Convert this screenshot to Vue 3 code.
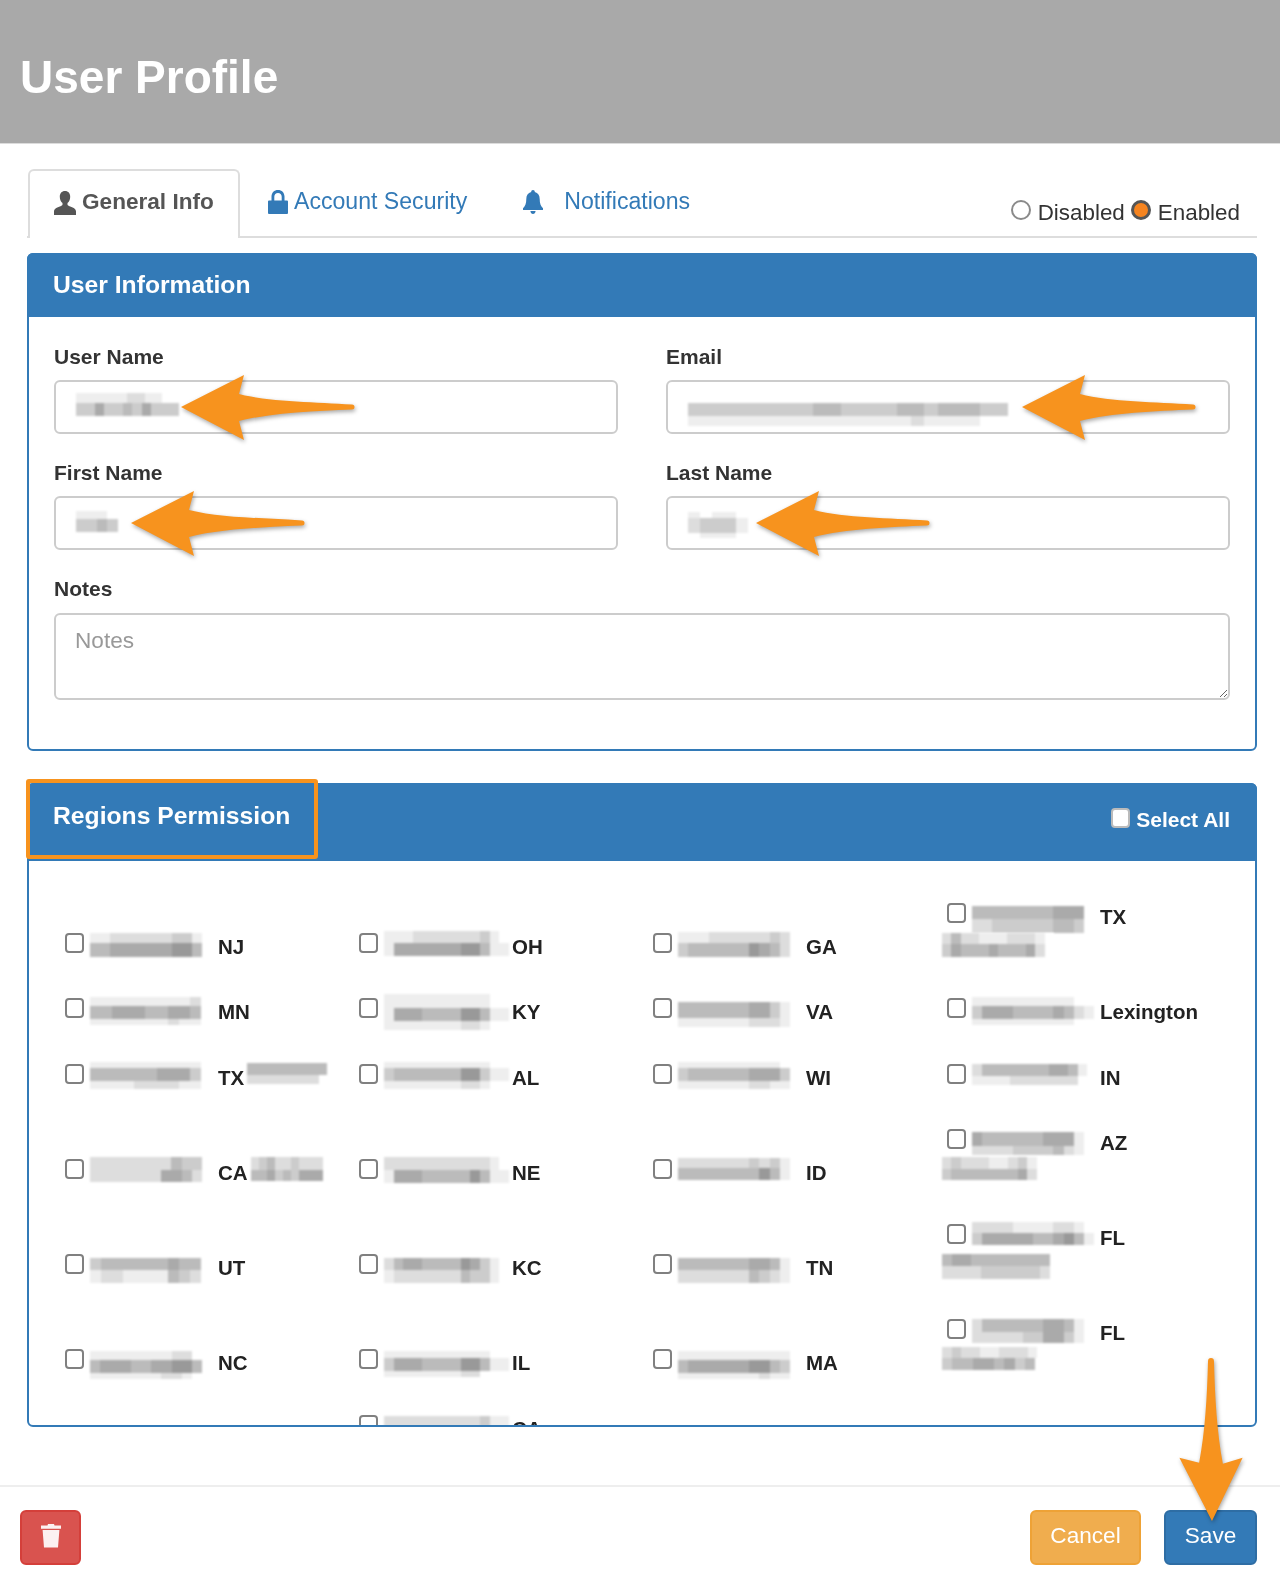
<script setup>
import { h } from 'vue'

const Px = (props) =>
  h('div', { class: 'px', style: { width: props.b.w + 'px', marginTop: props.b.y + 'px' } },
    props.b.rows.map(([height, str]) =>
      h('div', { class: 'px-row', style: { height: height + 'px' } },
        str.split('').map((c) => h('i', { style: { background: c.length && c !== '.' ? `#${c}${c}${c}` : 'transparent' } })))))
Px.props = ['b']

const P = (w, y, ...rows) => ({ w, y, rows })

const grid = [
  { t: 'NJ', b: P(112, 0, [10, 'eeddddddcce'], [14, 'bbaaaaaa99b']) },
  { t: 'OH', b: P(125, -2, [12, 'eeedddddddcef'], [13, 'eaaaaaaa99bee']) },
  { t: 'GA', b: P(122, -1, [11, 'eeeddddddcdf'], [14, 'cbbbbbb9abdf']) },
  { t: 'TX', b: P(122, 3, [13, 'bbbbbbbbaaaf'], [14, 'ddccccccbbcf']), l2: P(112, 0, [11, 'dbddeeedddef'], [13, 'cabbbabbbadf'], [0, '.']) },

  { t: 'MN', b: P(122, -1, [9, 'eeeeeeeeedf'], [13, 'bbaaabbaabf'], [6, 'eeeeeeedeef']) },
  { t: 'KY', b: P(125, -4, [14, 'eeeeeeeeeeeff'], [13, 'eaaabbbb99bee'], [9, 'eeeeeeeeddeff']) },
  { t: 'VA', b: P(122, -10, [14, 'ffffffffffff'], [16, 'bbbbbbbaacef'], [9, 'eeeeeeedddef']) },
  { t: 'Lexington', b: P(122, -1, [9, 'eeeeeeeeeeff'], [13, 'caaabbbbabde'], [6, 'eeeeeeeeeeff']) },

  { t: 'TX', b: P(122, -2, [6, 'eeeeeeeeeef'], [13, 'bbbbbbaaacf'], [8, 'eeeeddddeef']), extra: P(88, -1, [12, 'bbbbbbbbbbf'], [9, 'dddddddddff']) },
  { t: 'AL', b: P(125, -2, [6, 'eeeeeeeeeeeff'], [13, 'cbbbbbbb99cee'], [8, 'eeeeeeeeddeff']) },
  { t: 'WI', b: P(122, -2, [6, 'eeeeeeeeeeff'], [13, 'cbbbbbbaaacf'], [8, 'eeeeeeeddeef']) },
  { t: 'IN', b: P(125, 0, [12, 'dbbbbbbbaabef'], [9, 'eeeedddddddff'], [0, '.']) },

  { t: 'CA', b: P(122, -2, [13, 'ddddddddbccf'], [12, 'dddddddaabdf']), extra: P(88, -2, [13, 'dcbddcdddff'], [11, 'bbacbcaaaff'], [7, 'ffffffffffff']) },
  { t: 'NE', b: P(125, -2, [13, 'dddddddddddef'], [13, 'eaaabbbbb9bee']) },
  { t: 'ID', b: P(122, -1, [10, 'dddddddcdcef'], [12, 'bbbbbbbb9bef']) },
  { t: 'AZ', b: P(122, 3, [14, 'abbbbbbaaaef'], [9, 'ddddccccbdef']), l2: P(104, -2, [12, 'dcdddeedcef'], [11, 'cbbbbbbbadf']) },

  { t: 'UT', b: P(122, 4, [12, 'cbbbbbbabbf'], [13, 'eddeeeebcdf']) },
  { t: 'KC', b: P(125, 4, [12, 'dbaabbbb9acef'], [13, 'edddddddbccef']) },
  { t: 'TN', b: P(122, 4, [12, 'bbbbbbbaabef'], [13, 'dddddddbcdef']) },
  { t: 'FL', b: P(122, -2, [11, 'ddddeeeeddef'], [12, 'caaaaabba9be']), l2: P(118, 0, [12, 'baabbbbbbbbf'], [13, 'ddddccccccdf']) },

  { t: 'NC', b: P(112, 2, [9, 'eeeeeeeeddf'], [13, 'baaabbaa99b'], [6, 'eeeeeeeddef']) },
  { t: 'IL', b: P(125, 2, [7, 'eeeeeeeeeeeff'], [13, 'caaabbbb99bee'], [6, 'eeeeeeeeddfff']) },
  { t: 'MA', b: P(122, 2, [9, 'eeeeeeeeeeef'], [13, 'baaaaaa99bcf'], [6, 'eeeeeeeedeef']) },
  { t: 'FL', b: P(122, 0, [13, 'dbbbbbbaabef'], [11, 'dddddccaacef']), l2: P(114, -2, [11, 'dcddeedddeff'], [12, 'cbbaabacbff'], [7, 'ffffffffffff']) },

  {},
  { t: 'CA', b: P(125, 1, [20, 'ddddddddddcee']) },
  {},
  {},
]

const fields = [
  { label: 'User Name', id: 'un', blur: P(103, -14, [10, 'eeeeeeddeeff'], [13, 'ccaccbcaccc']), arrow: 126 },
  { label: 'Email', id: 'em', blur: P(320, -9, [5, 'fffffffffffffffffffffff'], [13, 'cccccccccbbccccbbcbbbcc'], [10, 'eeeeeeeeeeeeeeeedeeeeff']), arrow: 355 },
  { label: 'First Name', id: 'fn', blur: P(52, -12, [8, 'eeeff'], [13, 'ccbcf'], [3, 'fffff']), arrow: 76 },
  { label: 'Last Name', id: 'ln', blur: P(60, -11, [6, 'efeef'], [15, 'dccce'], [5, 'feeef']), arrow: 89 },
]
</script>

<template>
  <div class="page">
    <header class="top">
      <h1>User Profile</h1>
    </header>

    <main class="content">
      <div class="tabs">
        <a class="tab active">
          <svg class="ico" viewBox="0 0 22 24" width="22" height="24"><path d="M11 0c3.300 0 5.200 2.400 5.200 5.800 0 2.700-1.100 5.100-2.700 6.300v1.400c0 .6.500 1 1.400 1.400 3.500 1.300 7.100 2.200 7.100 5.700V24H0v-3.400c0-3.500 3.600-4.400 7.100-5.700.9-.4 1.400-.8 1.400-1.400v-1.400C6.900 10.900 5.800 8.500 5.800 5.800 5.800 2.400 7.700 0 11 0z" fill="#555"/></svg>
          General Info
        </a>
        <a class="tab">
          <svg class="ico lock" viewBox="0 0 20 24" width="20" height="24"><path d="M0 11.500a1 1 0 0 1 1-1h2.500V6.500C3.500 2.700 6.200 0 10 0s6.500 2.700 6.500 6.500v4H19a1 1 0 0 1 1 1V23a1 1 0 0 1-1 1H1a1 1 0 0 1-1-1zM6.300 10.500h7.400V6.700C13.700 4.500 12.200 3 10 3S6.300 4.500 6.300 6.700z" fill="#337ab7" fill-rule="evenodd"/></svg>
          Account Security
        </a>
        <a class="tab bell-tab">
          <svg class="ico bell" viewBox="0 0 20 24" width="20" height="24"><path d="M10 0c1.100 0 1.800.7 1.800 1.900 3.300.8 4.900 3.400 4.900 7 0 4.600 1 7.100 3.300 9.300v1.700H0v-1.700c2.300-2.200 3.300-4.700 3.300-9.300 0-3.600 1.600-6.200 4.900-7C8.200.7 8.900 0 10 0zM7.400 21h5.200c-.2 1.800-1.200 3-2.600 3s-2.400-1.200-2.600-3z" fill="#337ab7"/></svg>
          Notifications
        </a>
        <div class="status">
          <label class="opt"><input type="radio" name="status" class="radio" />Disabled</label>
          <label class="opt"><input type="radio" name="status" class="radio" checked />Enabled</label>
        </div>
      </div>

      <section class="panel info">
        <div class="panel-head"><h2>User Information</h2></div>
        <div class="info-body">
          <div class="form-grid">
            <div v-for="f in fields" :key="f.id" class="field">
              <label :for="f.id">{{ f.label }}</label>
              <div class="input-wrap">
                <input :id="f.id" type="text" class="control" />
                <div class="masked"><Px :b="f.blur" /></div>
                <svg class="arrow" :style="{ left: f.arrow + 'px' }" viewBox="0 0 176 68" width="176" height="68">
                  <path d="M1 34 64 2 59 21C90 29 135 29 172 31.500a2.500 2.500 0 0 1 0 5C135 38 90 40 59 48l5 19z" fill="#f7931e"/>
                </svg>
              </div>
            </div>
          </div>
          <div class="field notes">
            <label for="notes">Notes</label>
            <textarea id="notes" class="control area" placeholder="Notes"></textarea>
          </div>
        </div>
      </section>

      <section class="panel regions">
        <div class="panel-head regions-head">
          <h2>Regions Permission</h2>
          <label class="select-all"><input type="checkbox" class="cb" />Select All</label>
          <div class="callout"></div>
        </div>
        <div class="regions-body">
          <div class="region-grid">
            <div v-for="(c, i) in grid" :key="i" class="cell">
              <template v-if="c.t">
                <div class="line">
                  <input type="checkbox" class="cb" />
                  <div class="name"><Px :b="c.b" /></div>
                  <span class="code">{{ c.t }}</span>
                  <Px v-if="c.extra" :b="c.extra" class="extra" />
                </div>
                <div v-if="c.l2" class="line second"><Px :b="c.l2" /></div>
              </template>
            </div>
          </div>
        </div>
      </section>
    </main>

    <footer class="foot">
      <button class="btn danger" aria-label="Delete">
        <svg viewBox="0 0 20 25" width="20" height="25"><path d="M7 1h6L13.500 2.500H20v3.200H0V2.500h6.500zM1.600 7h16.800L17 24.500H3z" fill="#fff" opacity=".92"/></svg>
      </button>
      <div class="foot-right">
        <button class="btn warn">Cancel</button>
        <button class="btn primary">Save</button>
      </div>
    </footer>

    <svg class="arrow save-arrow" viewBox="0 0 68 166" width="68" height="164">
      <path d="M31 3a3 3 0 0 1 6 0C38 40 40 75 46 107l20-6-31 64L2 101l20 5C28 75 30 40 31 3z" fill="#f7931e"/>
    </svg>
  </div>
</template>

<style>
html, body { margin: 0; background: #fff; }
.px { flex: none; filter: blur(1.1px); }
.px-row { display: flex; }
.px-row i { flex: 1; }
</style>

<style scoped>
.page {
  position: relative;
  width: 1280px;
  height: 1585px;
  overflow: hidden;
  background: #fff;
  font-family: "Liberation Sans", Arial, sans-serif;
  color: #333;
  filter: blur(.35px);
}
.top {
  height: 143px;
  background: #a9a9a9;
  border-bottom: 1px solid #dcdcdc;
}
.top h1 {
  margin: 0;
  padding: 47px 0 0 20px;
  font-size: 46px;
  line-height: 60px;
  font-weight: bold;
  color: #fff;
}
.content { padding: 25px 23px 0 27px; }

.tabs {
  display: flex;
  align-items: stretch;
  height: 67px;
  border-bottom: 2px solid #ddd;
  font-size: 23.1px;
}
.tab {
  display: flex;
  align-items: center;
  color: #337ab7;
  text-decoration: none;
  padding: 0 0 2px 28px;
}
.tab.active {
  width: 212px;
  box-sizing: border-box;
  height: 69px;
  margin-left: 1px;
  padding: 0 0 6px 24px;
  border: 2px solid #ddd;
  border-bottom: 0;
  border-radius: 6px 6px 0 0;
  background: #fff;
  color: #555;
  font-size: 22.6px;
  font-weight: bold;
}
.active .ico { margin-top: 2px; margin-right: 6px; }
.ico { flex: none; margin-right: 6px; }
.bell-tab { padding-left: 56px; }
.bell { margin-right: 21px; }
.status {
  margin-left: auto;
  display: flex;
  gap: 6px;
  padding: 30px 17px 0 0;
  font-size: 22.4px;
}
.opt { display: flex; align-items: flex-start; line-height: 28px; }
.radio {
  appearance: none;
  box-sizing: border-box;
  width: 20px;
  height: 20px;
  margin: 1px 7px 0 0;
  border: 2px solid #8a8a8a;
  border-radius: 50%;
  background: #fff;
}
.radio:checked {
  border: 3px solid #555;
  background: #f6841f;
}

.panel {
  border: 2px solid #337ab7;
  border-radius: 6px;
  background: #fff;
  box-sizing: border-box;
}
.panel-head {
  background: #337ab7;
  color: #fff;
  margin: -2px -2px 0;
  border-radius: 6px 6px 0 0;
}
.panel-head h2 { margin: 0; font-size: 24.7px; font-weight: bold; }

.info { margin-top: 15px; height: 498px; }
.info .panel-head { height: 64px; padding: 0 0 0 26px; display: flex; align-items: center; }
.info-body { padding: 25px 25px 0 25px; }
.form-grid {
  display: grid;
  grid-template-columns: 564px 564px;
  column-gap: 48px;
  row-gap: 0;
}
.field label {
  display: block;
  font-size: 21px;
  font-weight: bold;
  line-height: 30px;
  color: #333;
}
.field { height: 116px; }
.input-wrap { position: relative; margin-top: 8px; }
.control {
  display: block;
  box-sizing: border-box;
  width: 100%;
  height: 54px;
  border: 2px solid #ccc;
  border-radius: 6px;
  background: #fff;
  font-family: inherit;
  font-size: 22.6px;
  outline: none;
}
.masked {
  position: absolute;
  left: 22px;
  top: 27px;
}
.arrow {
  position: absolute;
  top: -7px;
  filter: drop-shadow(1px 2px 2px rgba(0, 0, 0, .35));
  overflow: visible;
}
.notes { height: auto; }
.notes label { margin-bottom: 9px; }
.area {
  width: 1176px;
  height: 87px;
  padding: 13px 19px;
  resize: vertical;
}
.area::placeholder { color: #999; opacity: 1; }

.regions { position: relative; margin-top: 32px; height: 644px; }
.regions-head {
  position: relative;
  height: 78px;
  display: block;
}
.regions-head h2 { position: absolute; left: 26px; top: 17px; line-height: 32px; }
.select-all {
  position: absolute;
  right: 27px;
  top: 25px;
  display: flex;
  align-items: flex-start;
  font-size: 21px;
  font-weight: bold;
  line-height: 24px;
}
.select-all .cb { margin-right: 6px; border-color: #bbb; }
.callout {
  position: absolute;
  left: -1px;
  top: -4px;
  width: 292px;
  height: 80px;
  box-sizing: border-box;
  border: 4px solid #f7931e;
  border-radius: 3px;
}
.regions-body {
  padding: 42px 0 0 36px;
  height: 564px;
  box-sizing: border-box;
  overflow: hidden;
}
.region-grid {
  display: grid;
  grid-template-columns: repeat(4, 294px);
  align-items: end;
}
.cell { padding-bottom: 35.3px; }
.line { display: flex; align-items: flex-start; height: 30px; }
.second { margin-left: -5px; }
.cb {
  appearance: none;
  flex: none;
  box-sizing: border-box;
  width: 19px;
  height: 20px;
  margin: 0 6px 0 0;
  border: 2px solid #808080;
  border-radius: 4px;
  background: #fff;
}
.name { flex: none; width: 128px; }
.code {
  font-size: 20.5px;
  font-weight: bold;
  line-height: 27px;
  color: #222;
}
.extra { margin-left: 3px; }

.foot {
  position: absolute;
  left: 0;
  right: 0;
  top: 1485px;
  height: 100px;
  box-sizing: border-box;
  border-top: 2px solid #eee;
  padding: 23px 23px 0 20px;
  display: flex;
  justify-content: space-between;
  align-items: flex-start;
}
.foot-right { display: flex; gap: 23px; }
.btn {
  height: 55px;
  box-sizing: border-box;
  border-radius: 6px;
  border: 2px solid;
  color: #fff;
  font-family: inherit;
  font-size: 22.6px;
  padding: 0 0 4px;
  display: flex;
  align-items: center;
  justify-content: center;
}
.danger { width: 61px; background: #d9534f; border-color: #d43f3a; }
.warn { width: 111px; background: #f0ad4e; border-color: #eea236; }
.primary { width: 93px; background: #337ab7; border-color: #2e6da4; }
.save-arrow { left: 1177px; top: 1358px; }
</style>
